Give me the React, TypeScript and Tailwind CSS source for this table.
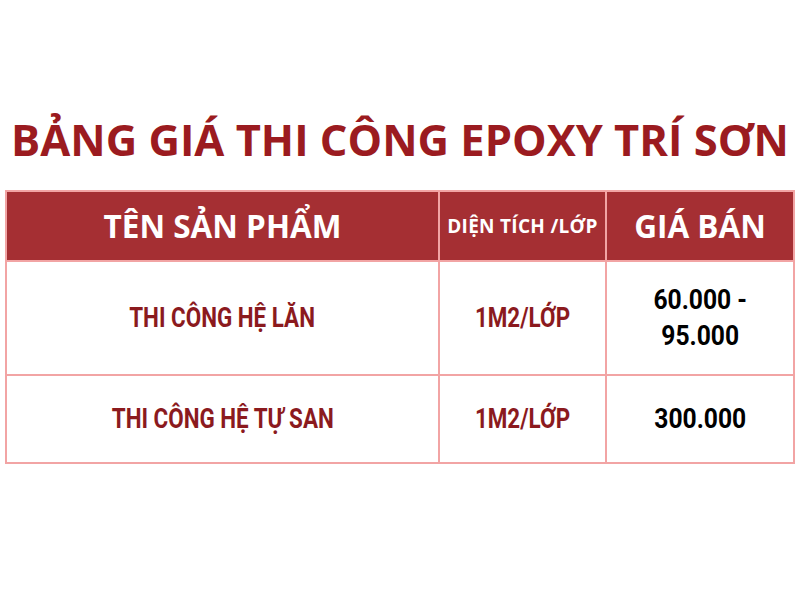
export default function App() {
  const rows = [
    { name: 'THI CÔNG HỆ LĂN', area: '1M2/LỚP', price: ['60.000 -', '95.000'], h: 'h-[114px]' },
    { name: 'THI CÔNG HỆ TỰ SAN', area: '1M2/LỚP', price: ['300.000'], h: 'h-[86px]' },
  ];
  // no condensed font installed, so squeeze Roboto bold instead
  const narrow = 'inline-block whitespace-nowrap scale-x-[0.8]';
  const narrowNum = 'inline-block whitespace-nowrap scale-x-[0.88]';

  return (
    <div className="w-[800px] h-[600px] bg-white font-['Open_Sans',sans-serif]">
      <div className="pt-[110px] flex justify-center">
        <h1 className="whitespace-nowrap text-[43.5px] leading-[60px] font-bold text-[#9b1b20]">
          BẢNG GIÁ THI CÔNG EPOXY TRÍ SƠN
        </h1>
      </div>
      <div className="mt-[20px] mx-[5px] border-2 border-[#f2a4a4]">
        <div className="flex h-[70px] bg-[#a52f33] text-white font-bold border-b-2 border-[#f2a4a4]">
          <div className="w-[433px] flex items-center justify-center text-[31.5px] border-r-2 border-[#f2a4a4]">
            TÊN SẢN PHẨM
          </div>
          <div className="w-[167px] flex items-center justify-center text-[19px] tracking-[0.3px] border-r-2 border-[#f2a4a4]">
            DIỆN TÍCH /LỚP
          </div>
          <div className="flex-1 flex items-center justify-center text-[31.5px]">GIÁ BÁN</div>
        </div>
        {rows.map((r, i) => (
          <div
            key={i}
            className={`flex ${r.h} font-['Roboto',sans-serif] font-bold text-[28px] leading-[36px] ${i === 0 ? 'border-b-2 border-[#f2a4a4]' : ''}`}
          >
            <div className="w-[433px] flex items-center justify-center text-[#8b1a1e] border-r-2 border-[#f2a4a4]">
              <span className={narrow}>{r.name}</span>
            </div>
            <div className="w-[167px] flex items-center justify-center text-[#8b1a1e] border-r-2 border-[#f2a4a4]">
              <span className={narrow}>{r.area}</span>
            </div>
            <div className="flex-1 flex flex-col items-center justify-center text-black">
              {r.price.map((p) => (
                <span key={p} className={narrowNum}>
                  {p}
                </span>
              ))}
            </div>
          </div>
        ))}
      </div>
    </div>
  );
}
